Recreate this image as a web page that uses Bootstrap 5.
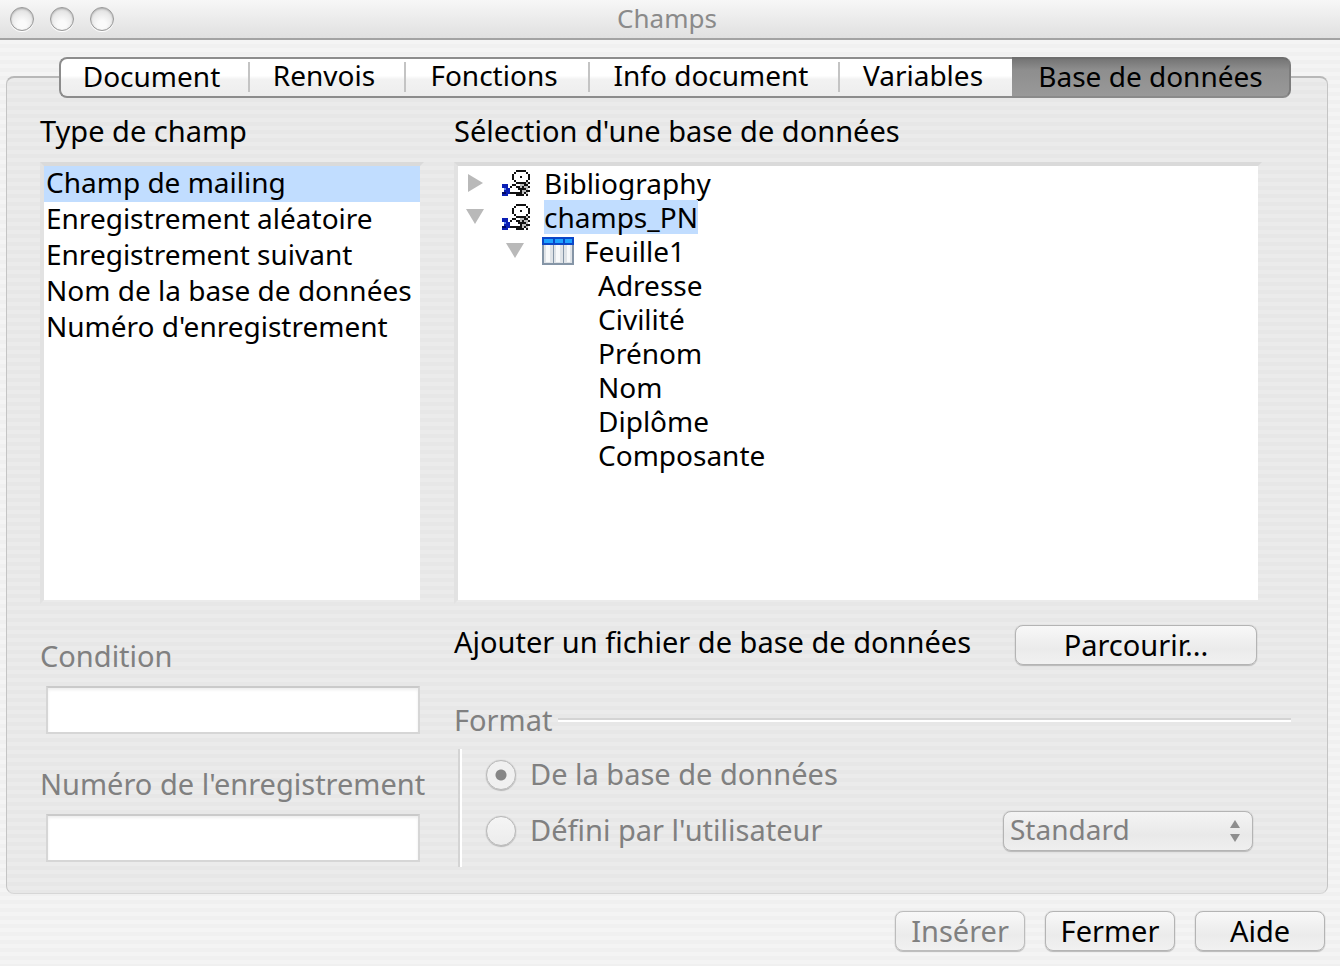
<!DOCTYPE html>
<html lang="fr">
<head>
<meta charset="utf-8">
<meta name="viewport" content="width=device-width, initial-scale=1">
<title>Champs</title>
<link href="https://cdn.jsdelivr.net/npm/bootstrap@5.3.0/dist/css/bootstrap.min.css" rel="stylesheet">
<style>
  body {
    font-family: "Noto Sans", "Open Sans", sans-serif;
    font-size: 29px;
    line-height: 36px;
    color: #000;
    background: repeating-linear-gradient(#f4f4f4 0 4px, #f0f0f0 4px 8px);
  }
  .title-bar {
    height: 40px;
    background: linear-gradient(#f7f7f7, #e0e0e0);
    border-bottom: 2px solid #a3a3a3;
    color: #8a8a8a;
    padding: 0 10px;
  }
  .title-bar h1 { font-size: 26px; line-height: 34px; font-weight: 400; padding: 0 6px 2px 0; }
  .lights { width: 104px; }
  .light {
    width: 24px; height: 24px; border-radius: 50%; padding: 0;
    border: 1px solid #999;
    background: radial-gradient(circle at 50% 75%, #fafafa 20%, #d8d8d8);
    box-shadow: 0 1px 0 #fff, inset 0 1px 2px #aaa;
  }
  .pane {
    margin: 36px 12px 0 6px;
    padding: 0 36px 26px 33px;
    border: 1px solid #c4c4c4;
    border-top: 2px solid #b8b8b8;
    border-bottom-color: #d6d6d6;
    border-radius: 8px;
    background: repeating-linear-gradient(#ebebeb 0 4px, #e7e7e7 4px 8px);
  }
  .tab-strip { margin: -21px 0 0 19px; }
  .tab-strip .nav-link {
    flex-basis: 0; padding: 0 6px 4px 0; height: 41px; font-size: 28px; line-height: 32px;
    color: #000; white-space: nowrap; border-radius: 0;
    border: solid #8c8c8c; border-width: 2px 0;
    background: linear-gradient(#fff 0 45%, #f2f2f2 55%, #ededed);
  }
  .tab-strip .nav-link + .nav-link::before {
    content: ""; float: left; width: 2px; height: 30px; margin-top: 3px; background: #c4c4c4;
  }
  .tab-strip .nav-link:first-child { border-left-width: 2px; border-radius: 8px 0 0 8px; }
  .tab-strip .nav-link.active {
    color: #000; padding-right: 0; border-color: #6e6e6e #7c7c7c #8a8a8a; border-right-width: 2px; border-radius: 0 8px 8px 0;
    background: linear-gradient(#757575, #8e8e8e 30%, #999);
  }
  .tab-strip .nav-link.active::before { display: none; }
  .columns { display: grid; grid-template-columns: minmax(0, 384fr) minmax(0, 837fr); column-gap: 30px; margin-top: 15px; }
  .well {
    height: 442px; border: 4px solid transparent; border-left-color: #e2e2e2; border-top-color: #dadada;
    background: #fff padding-box; overflow: hidden; margin-top: 13px;
  }
  .well .list-group-item {
    border: 0; padding: 0 2px 4px; font-size: 28px; line-height: 32px; color: #000; white-space: nowrap;
    background: #fff;
  }
  .well .list-group-item.active { background: #c1ddff; margin: 0; }
  .tree-well { margin-right: 29px; font-size: 28px; }
  .tree-well ul { list-style: none; margin: 0; padding: 0; }
  .tree-row { height: 34px; line-height: 34px; }
  .tree-row svg { flex: none; }
  .tree-row span { height: 34px; line-height: 34px; }
  .level-1 { padding-left: 8px; }
  .level-2 { padding-left: 48px; }
  .level-3 { padding-left: 140px; }
  .db-icon { margin: 0 14px 0 18px; }
  .sheet-icon { margin: 0 10px 0 18px; }
  .chosen { background: #c1ddff; }
  .dim { color: #808080; }
  .field-group { margin-top: 34px; }
  .field-group + .field-group { margin-top: 32px; }
  .field {
    height: 48px; border: 2px solid #d6d6d6; border-top-color: #cacaca; border-radius: 0;
    background: #fff; box-shadow: inset 0 2px 3px #eee; margin: 12px 4px 0 6px; width: auto;
  }
  .field:disabled { background: #fff; }
  .mac-btn {
    height: 40px; padding: 0 8px; font-size: 29px; line-height: 36px; color: #000;
    border: 1px solid #b4b4b4; border-radius: 8px;
    background: linear-gradient(#f8f8f8, #ebebeb 60%, #f1f1f1);
    box-shadow: 0 0 1px #aaa, 0 1px 1px #bbb;
  }
  .mac-btn:disabled { color: #808080; opacity: 1; border-color: #bcbcbc; background: linear-gradient(#f8f8f8, #ebebeb 60%, #f1f1f1); }
  .browse { width: 242px; margin-right: 34px; }
  .add-row { margin-top: 21px; height: 40px; }
  .add-row span { line-height: 34px; }
  .rule { height: 4px; background: #fff; border-top: 2px solid #d4d4d4; margin-left: 6px; }
  .format-head { margin-top: 37px; }
  .format-body {
    border-left: 2px solid #d4d4d4; box-shadow: inset 2px 0 0 #fff;
    margin: 11px 38px 0 4px; height: 118px; padding: 6px 0 0 26px;
  }
  .choice { height: 40px; margin-bottom: 16px; }
  .format-body .form-check-input {
    width: 30px; height: 30px; margin: 0; flex: none; opacity: 1;
    border: 1px solid #b8b8b8; background: linear-gradient(#f5f5f5, #ececec); box-shadow: 0 0 1px #aaa, 0 1px 1px #bbb;
  }
  .format-body .form-check-input:checked { background: radial-gradient(circle, #868686 0 5px, #f0f0f0 6px); }
  .choice label { margin-left: 14px; padding-bottom: 2px; }
  .picker { width: 250px; }
  .picker select {
    display: block; height: 40px; width: 100%; padding: 0 40px 4px 6px; border: 1px solid #b4b4b4; border-radius: 8px; line-height: 32px;
    background: linear-gradient(#f4f4f4, #e9e9e9 60%, #efefef); color: #808080; box-shadow: 0 0 1px #aaa, 0 1px 1px #bbb;
    font-size: 28px; opacity: 1; appearance: none;
  }
  .picker svg { position: absolute; right: 13px; top: 9px; pointer-events: none; }
  .actions { padding: 17px 15px 15px; gap: 20px; }
  .actions .mac-btn { width: 130px; }
</style>
</head>
<body class="min-vh-100 d-flex flex-column">

<svg width="0" height="0" class="position-absolute" aria-hidden="true">
  <symbol id="ico-db" viewBox="0 0 14 13" shape-rendering="crispEdges">
    <path fill="#fff" d="M7 1h5v1h1v3h-1v1H7V5H6V2h1zM5 8h6v3H5z"/>
    <path fill="#bbb" d="M9 6h4v6H9z"/>
    <path fill="#111" d="M7 0h5v1H7zM6 1h1v1H6zM12 1h1v1h-1zM5 2h1v3H5zM13 2h1v3h-1zM9 3h1v1H9zM6 5h1v1H6zM12 5h1v1h-1zM7 6h5v1H7zM13 6h1v1h-1zM5 7h2v1H5zM11 7h2v1h-2zM4 8h1v1H4zM7 8h2v1H7zM10 8h1v1h-1zM13 8h1v1h-1zM3 9h1v1H3zM8 9h4v1H8zM3 10h1v1H3zM9 10h1v1H9zM12 10h2v1h-2zM4 11h6v1H4zM11 11h1v1h-1zM7 12h4v1H7zM12 12h1v1h-1z"/>
    <path fill="#0a1eb4" d="M0 7h3v2h1v3H3v1H0v-2h1V9H0z"/>
    <path fill="#5c86ee" d="M1 9h1v1H1z"/><path fill="#000a64" d="M0 11h2v1H0z"/>
  </symbol>
  <symbol id="ico-sheet" viewBox="0 0 32 28">
    <path fill="#8595a6" d="M0 0h32v28H0z"/>
    <path fill="#0b46c8" d="M0 0h32v8H0z"/>
    <path fill="#1fa2ff" d="M2 2h9v4H2zM13 2h8v4h-8zM23 2h7v4h-7z"/>
    <path fill="#dfe3e7" d="M2 8h9v18H2zM12 8h9v18h-9zM22 8h8v18h-8z"/>
    <path fill="#f8f9fa" d="M4 8h4v17H4zM14 8h4v17h-4zM25 8h3v17h-3z"/>
  </symbol>
  <symbol id="ico-closed" viewBox="0 0 18 18"><path fill="#b9b9b9" d="M2 0l15 9-15 9z"/></symbol>
  <symbol id="ico-open" viewBox="0 0 18 18"><path fill="#b9b9b9" d="M0 1h18L9 16z"/></symbol>
</svg>

<header class="title-bar d-flex align-items-center">
  <div class="lights d-flex gap-3">
    <button class="light" aria-label="Fermer la fenêtre"></button>
    <button class="light" aria-label="Réduire"></button>
    <button class="light" aria-label="Agrandir"></button>
  </div>
  <h1 class="flex-grow-1 text-center m-0">Champs</h1>
  <div class="lights"></div>
</header>

<main class="pane">
  <nav class="tab-strip nav flex-nowrap" role="tablist">
    <button class="nav-link" role="tab" style="flex-grow:181">Document</button>
    <button class="nav-link" role="tab" style="flex-grow:150">Renvois</button>
    <button class="nav-link" role="tab" style="flex-grow:178">Fonctions</button>
    <button class="nav-link" role="tab" style="flex-grow:244">Info document</button>
    <button class="nav-link" role="tab" style="flex-grow:168">Variables</button>
    <button class="nav-link active" role="tab" aria-selected="true" style="flex-grow:277">Base de données</button>
  </nav>

  <div class="columns">
    <section class="d-flex flex-column">
      <div id="type-label">Type de champ</div>
      <div class="well list-group rounded-0" aria-labelledby="type-label">
        <button class="list-group-item active text-start">Champ de mailing</button>
        <button class="list-group-item text-start">Enregistrement aléatoire</button>
        <button class="list-group-item text-start">Enregistrement suivant</button>
        <button class="list-group-item text-start">Nom de la base de données</button>
        <button class="list-group-item text-start">Numéro d'enregistrement</button>
      </div>
      <div class="field-group dim d-flex flex-column">
        <label for="cond">Condition</label>
        <input id="cond" class="form-control field" type="text" disabled>
      </div>
      <div class="field-group dim d-flex flex-column">
        <label for="num" class="text-nowrap">Numéro de l'enregistrement</label>
        <input id="num" class="form-control field" type="text" disabled>
      </div>
    </section>

    <section class="d-flex flex-column">
      <div id="db-label">Sélection d'une base de données</div>
      <div class="well tree-well">
        <ul role="tree" aria-labelledby="db-label">
          <li role="treeitem" aria-expanded="false">
            <div class="tree-row level-1 d-flex align-items-center"><svg width="18" height="18"><use href="#ico-closed"/></svg><svg class="db-icon" width="28" height="26"><use href="#ico-db"/></svg><span>Bibliography</span></div>
          </li>
          <li role="treeitem" aria-expanded="true" aria-selected="true">
            <div class="tree-row level-1 d-flex align-items-center"><svg width="18" height="18"><use href="#ico-open"/></svg><svg class="db-icon" width="28" height="26"><use href="#ico-db"/></svg><span class="chosen">champs_PN</span></div>
            <ul role="group">
              <li role="treeitem" aria-expanded="true">
                <div class="tree-row level-2 d-flex align-items-center"><svg width="18" height="18"><use href="#ico-open"/></svg><svg class="sheet-icon" width="32" height="28"><use href="#ico-sheet"/></svg><span>Feuille1</span></div>
                <ul role="group">
                  <li role="treeitem" class="tree-row level-3 d-flex"><span>Adresse</span></li>
                  <li role="treeitem" class="tree-row level-3 d-flex"><span>Civilité</span></li>
                  <li role="treeitem" class="tree-row level-3 d-flex"><span>Prénom</span></li>
                  <li role="treeitem" class="tree-row level-3 d-flex"><span>Nom</span></li>
                  <li role="treeitem" class="tree-row level-3 d-flex"><span>Diplôme</span></li>
                  <li role="treeitem" class="tree-row level-3 d-flex"><span>Composante</span></li>
                </ul>
              </li>
            </ul>
          </li>
        </ul>
      </div>

      <div class="add-row d-flex justify-content-between">
        <span id="add-label">Ajouter un fichier de base de données</span>
        <button class="btn mac-btn browse" aria-describedby="add-label">Parcourir...</button>
      </div>

      <div class="dim" role="radiogroup" aria-labelledby="format-label">
        <div class="format-head d-flex align-items-center">
          <span id="format-label">Format</span>
          <div class="rule flex-grow-1"></div>
        </div>
        <div class="format-body">
          <div class="choice d-flex align-items-center">
            <input class="form-check-input" type="radio" name="format" id="from-db" checked disabled>
            <label for="from-db">De la base de données</label>
          </div>
          <div class="choice d-flex align-items-center">
            <input class="form-check-input" type="radio" name="format" id="custom" disabled>
            <label for="custom">Défini par l'utilisateur</label>
            <div class="picker position-relative ms-auto">
              <select aria-label="Format" disabled><option>Standard</option></select>
              <svg width="10" height="22" viewBox="0 0 10 22"><path fill="#8e8e8e" d="M5 0l5 8H0zM0 14h10l-5 8z"/></svg>
            </div>
          </div>
        </div>
      </div>
    </section>
  </div>
</main>

<footer class="actions d-flex justify-content-end">
  <button class="btn mac-btn" disabled>Insérer</button>
  <button class="btn mac-btn">Fermer</button>
  <button class="btn mac-btn">Aide</button>
</footer>
<script src="https://cdn.jsdelivr.net/npm/bootstrap@5.3.0/dist/js/bootstrap.bundle.min.js"></script>
</body>
</html>
